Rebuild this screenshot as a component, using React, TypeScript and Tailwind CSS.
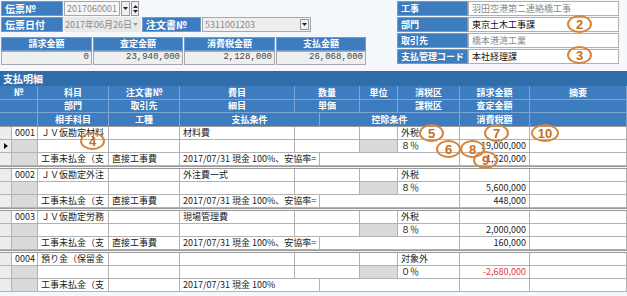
import React from "react";

// 明細グリッドの列幅（左端 0 → 625px）
const COL = {
  sel: "w-[12px]",
  no: "w-[26px]",
  head: "w-[38px]",
  kamoku: "w-[71px]",
  chumon: "w-[71px]",
  himoku: "w-[115px]",
  suryo: "w-[65px]",
  tani: "w-[38px]",
  zei: "w-[62px]",
  kin: "w-[70px]",
  joken: "w-[140px]",
  tekiyo: "flex-1",
};

type Line = {
  no: string;
  kamoku: string;
  himoku: string;
  zeiKbn: string;
  rate: string;
  satei: string;
  aite: string;
  koshu: string;
  joken: string;
  tax: string;
  minus?: boolean;
  current?: boolean;
};

const LINES: Line[] = [
  {
    no: "0001",
    kamoku: "ＪＶ仮勘定材料",
    himoku: "材料費",
    zeiKbn: "外税",
    rate: "８％",
    satei: "19,000,000",
    aite: "工事未払金（支",
    koshu: "直接工事費",
    joken: "2017/07/31 現金 100%、安協率=",
    tax: "1,520,000",
    current: true,
  },
  {
    no: "0002",
    kamoku: "ＪＶ仮勘定外注",
    himoku: "外注費一式",
    zeiKbn: "外税",
    rate: "８％",
    satei: "5,600,000",
    aite: "工事未払金（支",
    koshu: "直接工事費",
    joken: "2017/07/31 現金 100%、安協率=",
    tax: "448,000",
  },
  {
    no: "0003",
    kamoku: "ＪＶ仮勘定労務",
    himoku: "現場管理費",
    zeiKbn: "外税",
    rate: "８％",
    satei: "2,000,000",
    aite: "工事未払金（支",
    koshu: "直接工事費",
    joken: "2017/07/31 現金 100%、安協率=",
    tax: "160,000",
  },
  {
    no: "0004",
    kamoku: "預り金（保留金",
    himoku: "",
    zeiKbn: "対象外",
    rate: "０％",
    satei: "-2,680,000",
    aite: "工事未払金（支",
    koshu: "",
    joken: "2017/07/31 現金 100%",
    tax: "",
    minus: true,
  },
];

function Label({ w, small, children }: { w: string; small?: boolean; children: React.ReactNode }) {
  return (
    <div
      className={`${w} flex shrink-0 items-center overflow-hidden whitespace-nowrap border border-[#6d9dd0] bg-[#3d7cbf] px-[3px] ${
        small ? "text-[9px]" : "text-[10px]"
      } font-bold text-white`}
    >
      {children}
    </div>
  );
}

function DropBtn() {
  return (
    <div className="flex w-[9px] shrink-0 items-center justify-center border border-[#9a9a9a] bg-[#f0f0f0]">
      <svg width="5" height="3" viewBox="0 0 5 3">
        <path d="M0 0h5L2.5 3z" fill="#222" />
      </svg>
    </div>
  );
}

function HeadCell({ w, children }: { w: string; children?: React.ReactNode }) {
  return (
    <div className={`${w} flex shrink-0 items-center justify-center border-r border-[#79a6d6] text-[9px] font-bold text-white`}>
      {children}
    </div>
  );
}

function Cell({
  w,
  children,
  right,
  gray,
  className = "",
}: {
  w: string;
  children?: React.ReactNode;
  right?: boolean;
  gray?: boolean;
  className?: string;
}) {
  return (
    <div
      className={`${w} flex shrink-0 items-center overflow-hidden whitespace-nowrap border-r border-[#b2b2b2] px-[3px] text-[9px] text-[#222] ${
        right ? "justify-end" : ""
      } ${gray ? "bg-[#dadada]" : "bg-white"} ${className}`}
    >
      {children}
    </div>
  );
}

function Sel({ mark }: { mark?: boolean }) {
  return (
    <div className="flex w-[12px] shrink-0 items-center justify-center border-r border-[#b2b2b2] bg-[#ededed]">
      {mark && (
        <svg width="4" height="6" viewBox="0 0 4 6">
          <path d="M0 0l4 3-4 3z" fill="#111" />
        </svg>
      )}
    </div>
  );
}

function Group({ line, first }: { line: Line; first?: boolean }) {
  const row = "flex h-[13px] border-b border-[#b2b2b2]";
  return (
    <div className={first ? "" : "border-t-[3px] border-double border-[#9a9a9a]"}>
      <div className={row}>
        <Sel />
        <Cell w={COL.no}>{line.no}</Cell>
        <Cell w={COL.kamoku}>{line.kamoku}</Cell>
        <Cell w={COL.chumon} />
        <Cell w={COL.himoku}>{line.himoku}</Cell>
        <Cell w={COL.suryo} />
        <Cell w={COL.tani} />
        <Cell w={COL.zei}>{line.zeiKbn}</Cell>
        <Cell w={COL.kin} />
        <Cell w={COL.tekiyo} />
      </div>
      <div className={row}>
        <Sel mark={line.current} />
        <Cell w={COL.no} gray />
        <Cell w={COL.kamoku} />
        <Cell w={COL.chumon} />
        <Cell w={COL.himoku} />
        <Cell w={COL.suryo} />
        <Cell w={COL.tani} gray />
        <Cell w={COL.zei}>{line.rate}</Cell>
        <Cell w={COL.kin} right className={line.minus ? "text-[#e2383b]" : ""}>
          {line.satei}
        </Cell>
        <Cell w={COL.tekiyo} />
      </div>
      <div className={row}>
        <Sel />
        <Cell w={COL.no} gray />
        <Cell w={COL.kamoku}>{line.aite}</Cell>
        <Cell w={COL.chumon}>{line.koshu}</Cell>
        <Cell w={COL.joken}>{line.joken}</Cell>
        <Cell w={COL.joken} />
        <Cell w={COL.kin} right>
          {line.tax}
        </Cell>
        <Cell w={COL.tekiyo} />
      </div>
    </div>
  );
}

function Mark({ pos, n, wide }: { pos: string; n: string; wide?: boolean }) {
  return (
    <div
      className={`absolute ${pos} ${wide ? "w-[28px]" : "w-[25px]"} flex h-[18px] items-center justify-center rounded-[50%] border-2 border-[#d6843a] font-['Liberation_Sans',sans-serif] text-[13px] font-bold leading-none text-[#c86e18]`}
    >
      {n}
    </div>
  );
}

export default function App() {
  const summary = [
    { label: "請求金額", value: "0", w: "w-[91px]" },
    { label: "査定金額", value: "23,940,000", w: "w-[90px]" },
    { label: "消費税金額", value: "2,128,000", w: "w-[91px]" },
    { label: "支払金額", value: "26,068,000", w: "w-[90px]" },
  ];
  const info = [
    { label: "工事", value: "羽田空港第二連絡橋工事", dim: true },
    { label: "部門", value: "東京土木工事課" },
    { label: "取引先", value: "橋本港湾工業", dim: true },
    { label: "支払管理コード", value: "本社経理課" },
  ];

  return (
    <div className="relative h-[296px] w-[627px] overflow-hidden bg-[#f4f7fb] font-['Noto_Sans_CJK_JP','Noto_Sans',sans-serif]">
      <div className="flex h-[71px] pl-[1px] pt-[1px]">
        {/* 左：伝票情報と金額集計 */}
        <div className="w-[366px] shrink-0">
          <div className="flex h-[15px]">
            <Label w="w-[62px]">伝票№</Label>
            <div className="ml-[1px] flex w-[56px] shrink-0 items-center border border-[#a8a8a8] bg-[#f7f7f7] px-[2px] text-[9px] text-[#8a8a8a]">
              2017060001
            </div>
            <div className="ml-[1px] flex">
              <DropBtn />
            </div>
            <div className="ml-[1px] flex w-[8px] shrink-0 flex-col items-center justify-center gap-[2px] border border-[#9a9a9a] bg-[#f0f0f0]">
              <svg width="5" height="3" viewBox="0 0 5 3">
                <path d="M0 3h5L2.5 0z" fill="#222" />
              </svg>
              <svg width="5" height="3" viewBox="0 0 5 3">
                <path d="M0 0h5L2.5 3z" fill="#222" />
              </svg>
            </div>
          </div>
          <div className="mt-[1px] flex h-[15px]">
            <Label w="w-[62px]">伝票日付</Label>
            <div className="ml-[1px] flex w-[77px] shrink-0 items-center justify-between bg-[#e9e9e9] px-[1px] text-[9px] text-[#8a8a8a]">
              <span>2017年06月26日</span>
              <svg width="5" height="3" viewBox="0 0 5 3" className="mr-[2px]">
                <path d="M0 0h5L2.5 3z" fill="#999" />
              </svg>
            </div>
            <div className="ml-[1px] flex">
              <Label w="w-[59px]">注文書№</Label>
            </div>
            <div className="ml-[1px] flex w-[109px] shrink-0 items-stretch justify-between border border-[#a8a8a8] bg-[#eeeeee] pl-[2px] text-[9px] text-[#8a8a8a]">
              <span className="flex items-center">5311001203</span>
              <div className="my-[1px] mr-[1px] flex">
                <DropBtn />
              </div>
            </div>
          </div>
          <div className="mt-[5px] flex gap-[1px]">
            {summary.map((s) => (
              <div key={s.label} className={`${s.w} shrink-0`}>
                <div className="flex h-[14px] items-center justify-center border border-[#6d9dd0] bg-[#3d7cbf] text-[9px] font-bold text-white">
                  {s.label}
                </div>
                <div className="flex h-[14px] items-center justify-end border border-[#a8a8a8] bg-[#efefef] px-[2px] font-['Liberation_Mono',monospace] text-[9px] text-[#444]">
                  {s.value}
                </div>
              </div>
            ))}
          </div>
        </div>

        {/* 右：工事・部門など */}
        <div className="ml-[30px] w-[222px] shrink-0">
          {info.map((r) => (
            <div key={r.label} className="mb-[1px] flex h-[15px]">
              <Label w="w-[71px]" small>
                {r.label}
              </Label>
              <div
                className={`flex flex-1 items-center whitespace-nowrap border border-[#b0b0b0] bg-white px-[3px] text-[9px] ${
                  r.dim ? "text-[#8a8a8a]" : "text-[#111]"
                }`}
              >
                {r.value}
              </div>
            </div>
          ))}
        </div>
      </div>

      {/* 支払明細 */}
      <div className="w-[627px]">
        <div className="flex h-[15px] items-center bg-[#2f6dab] px-[3px] text-[10px] font-bold text-white">支払明細</div>
        <div className="bg-[#3d7cbf]">
          <div className="flex h-[14px] border-b border-[#79a6d6]">
            <HeadCell w={COL.head}>№</HeadCell>
            <HeadCell w={COL.kamoku}>科目</HeadCell>
            <HeadCell w={COL.chumon}>注文書№</HeadCell>
            <HeadCell w={COL.himoku}>費目</HeadCell>
            <HeadCell w={COL.suryo}>数量</HeadCell>
            <HeadCell w={COL.tani}>単位</HeadCell>
            <HeadCell w={COL.zei}>消税区</HeadCell>
            <HeadCell w={COL.kin}>請求金額</HeadCell>
            <HeadCell w={COL.tekiyo}>摘要</HeadCell>
          </div>
          <div className="flex h-[13px] border-b border-[#79a6d6]">
            <HeadCell w={COL.head} />
            <HeadCell w={COL.kamoku}>部門</HeadCell>
            <HeadCell w={COL.chumon}>取引先</HeadCell>
            <HeadCell w={COL.himoku}>細目</HeadCell>
            <HeadCell w={COL.suryo}>単価</HeadCell>
            <HeadCell w={COL.tani} />
            <HeadCell w={COL.zei}>課税区</HeadCell>
            <HeadCell w={COL.kin}>査定金額</HeadCell>
            <HeadCell w={COL.tekiyo} />
          </div>
          <div className="flex h-[14px] border-b border-[#9a9a9a]">
            <HeadCell w={COL.head} />
            <HeadCell w={COL.kamoku}>相手科目</HeadCell>
            <HeadCell w={COL.chumon}>工種</HeadCell>
            <HeadCell w={COL.joken}>支払条件</HeadCell>
            <HeadCell w={COL.joken}>控除条件</HeadCell>
            <HeadCell w={COL.kin}>消費税額</HeadCell>
            <HeadCell w={COL.tekiyo} />
          </div>
        </div>
        {LINES.map((l, i) => (
          <Group key={l.no} line={l} first={i === 0} />
        ))}
      </div>

      {/* 注記の番号 */}
      <Mark pos="left-[567px] top-[15px]" n="2" />
      <Mark pos="left-[567px] top-[46px]" n="3" />
      <Mark pos="left-[80px] top-[132px]" n="4" />
      <Mark pos="left-[419px] top-[124px]" n="5" />
      <Mark pos="left-[436px] top-[140px]" n="6" />
      <Mark pos="left-[484px] top-[124px]" n="7" />
      <Mark pos="left-[460px] top-[140px]" n="8" />
      <Mark pos="left-[473px] top-[151px]" n="9" />
      <Mark pos="left-[531px] top-[124px]" n="10" wide />
    </div>
  );
}
